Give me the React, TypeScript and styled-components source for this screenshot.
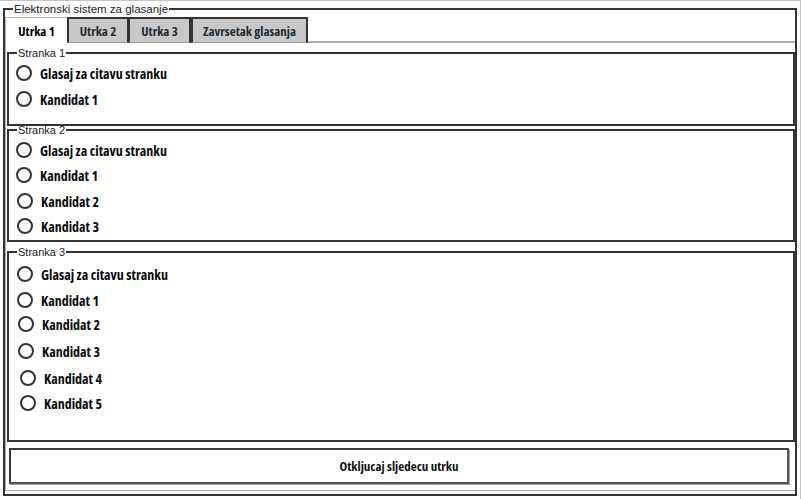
import styled, { createGlobalStyle } from "styled-components";

const Global = createGlobalStyle`
  html, body {
    margin: 0;
    background: #fff;
  }
  * {
    box-sizing: border-box;
  }
`;

const Window = styled.div`
  width: 801px;
  height: 499px;
  padding: 3px 3px 0 3px;
  border-top: 1px solid #c4c4c4;
  border-right: 1px solid #c4c4c4;
  overflow: hidden;
`;

const Frame = styled.fieldset`
  margin: 0;
  padding: 3px 0 3px 0;
  width: 794px;
  border: 2px solid #333;
`;

const Legend = styled.legend<{ $size?: number }>`
  font-family: "Liberation Sans", Arial, sans-serif;
  font-size: ${(p) => p.$size ?? 11}px;
  line-height: 10px;
  color: #1a1a1a;
  padding: 0 1px;
  margin-left: 8px;
`;

const Condensed = `
  font-family: "Open Sans", "Liberation Sans", sans-serif;
  font-stretch: condensed;
  font-weight: 700;
`;

const TabBar = styled.div`
  display: flex;
  height: 26px;
`;

const Tab = styled.div<{ $active?: boolean; $width: number; $gap?: number }>`
  ${Condensed}
  width: ${(p) => p.$width}px;
  margin-left: ${(p) => p.$gap ?? 0}px;
  display: flex;
  align-items: center;
  justify-content: center;
  font-size: 13px;
  color: ${(p) => (p.$active ? "#000" : "#1d2c36")};
  background: ${(p) => (p.$active ? "#fff" : "#c8c8c8")};
  border-top: ${(p) => (p.$active ? "1px solid #b4b4b4" : "2px solid #333")};
  border-left: ${(p) => (p.$active ? "1px solid #b4b4b4" : "2px solid #333")};
  border-right: ${(p) => (p.$active ? "none" : "2px solid #333")};
  border-bottom: ${(p) => (p.$active ? "none" : "1px solid #9a9a9a")};
  padding-top: 1px;
`;

const TabRest = styled.div`
  flex: 1;
  border-bottom: 2px solid #b0b0b0;
`;

const Panel = styled.div`
  border-left: 1px solid #b0b0b0;
  border-bottom: 1px solid #b0b0b0;
  padding: 5px 0 6px 1px;
`;

const Group = styled.fieldset<{ $top: number }>`
  margin: ${(p) => p.$top}px 0 0 0;
  padding: 0;
  border: 2px solid #333;
`;

const Body = styled.div<{ $height: number }>`
  display: flex;
  flex-direction: column;
  height: ${(p) => p.$height}px;
`;

const Row = styled.label<{ $top: number; $indent: number }>`
  ${Condensed}
  display: flex;
  align-items: center;
  gap: 8px;
  height: 24px;
  flex: none;
  margin-top: ${(p) => p.$top}px;
  padding-left: ${(p) => p.$indent}px;
  font-size: 14px;
  color: #0a0a0a;
`;

const Radio = styled.span`
  width: 16px;
  height: 16px;
  border-radius: 50%;
  border: 2.5px solid #333;
  background: #fff;
  flex: none;
`;

const Button = styled.button`
  ${Condensed}
  display: block;
  margin: 6px 0 0 2px;
  width: 780px;
  height: 36px;
  background: #fff;
  border: 2px solid #3c3c3c;
  border-right-color: #555;
  border-bottom-color: #555;
  box-shadow: 1px 1px 0 #a0a0a0;
  font-size: 13px;
  color: #111;
  padding: 0;
`;

type Party = {
  name: string;
  top: number;
  height: number;
  rows: { text: string; top: number; indent: number }[];
};

const parties: Party[] = [
  {
    name: "Stranka 1",
    top: 0,
    height: 66,
    rows: [
      { text: "Glasaj za citavu stranku", top: 3, indent: 7 },
      { text: "Kandidat 1", top: 2, indent: 7 },
    ],
  },
  {
    name: "Stranka 2",
    top: -1,
    height: 105,
    rows: [
      { text: "Glasaj za citavu stranku", top: 3, indent: 7 },
      { text: "Kandidat 1", top: 1, indent: 7 },
      { text: "Kandidat 2", top: 2, indent: 8 },
      { text: "Kandidat 3", top: 1, indent: 8 },
    ],
  },
  {
    name: "Stranka 3",
    top: 5,
    height: 183,
    rows: [
      { text: "Glasaj za citavu stranku", top: 5, indent: 8 },
      { text: "Kandidat 1", top: 2, indent: 8 },
      { text: "Kandidat 2", top: 0, indent: 9 },
      { text: "Kandidat 3", top: 3, indent: 9 },
      { text: "Kandidat 4", top: 3, indent: 11 },
      { text: "Kandidat 5", top: 1, indent: 11 },
    ],
  },
];

export default function App() {
  return (
    <>
      <Global />
      <Window>
        <Frame>
          <Legend $size={11.5}>Elektronski sistem za glasanje</Legend>
          <TabBar>
            <Tab $active $width={62}>Utrka 1</Tab>
            <Tab $width={62}>Utrka 2</Tab>
            <Tab $width={63} $gap={-1}>Utrka 3</Tab>
            <Tab $width={117}>Zavrsetak glasanja</Tab>
            <TabRest />
          </TabBar>
          <Panel>
            {parties.map((p) => (
              <Group key={p.name} $top={p.top}>
                <Legend>{p.name}</Legend>
                <Body $height={p.height}>
                  {p.rows.map((r) => (
                    <Row key={r.text} $top={r.top} $indent={r.indent}>
                      <Radio />
                      {r.text}
                    </Row>
                  ))}
                </Body>
              </Group>
            ))}
            <Button>Otkljucaj sljedecu utrku</Button>
          </Panel>
        </Frame>
      </Window>
    </>
  );
}
